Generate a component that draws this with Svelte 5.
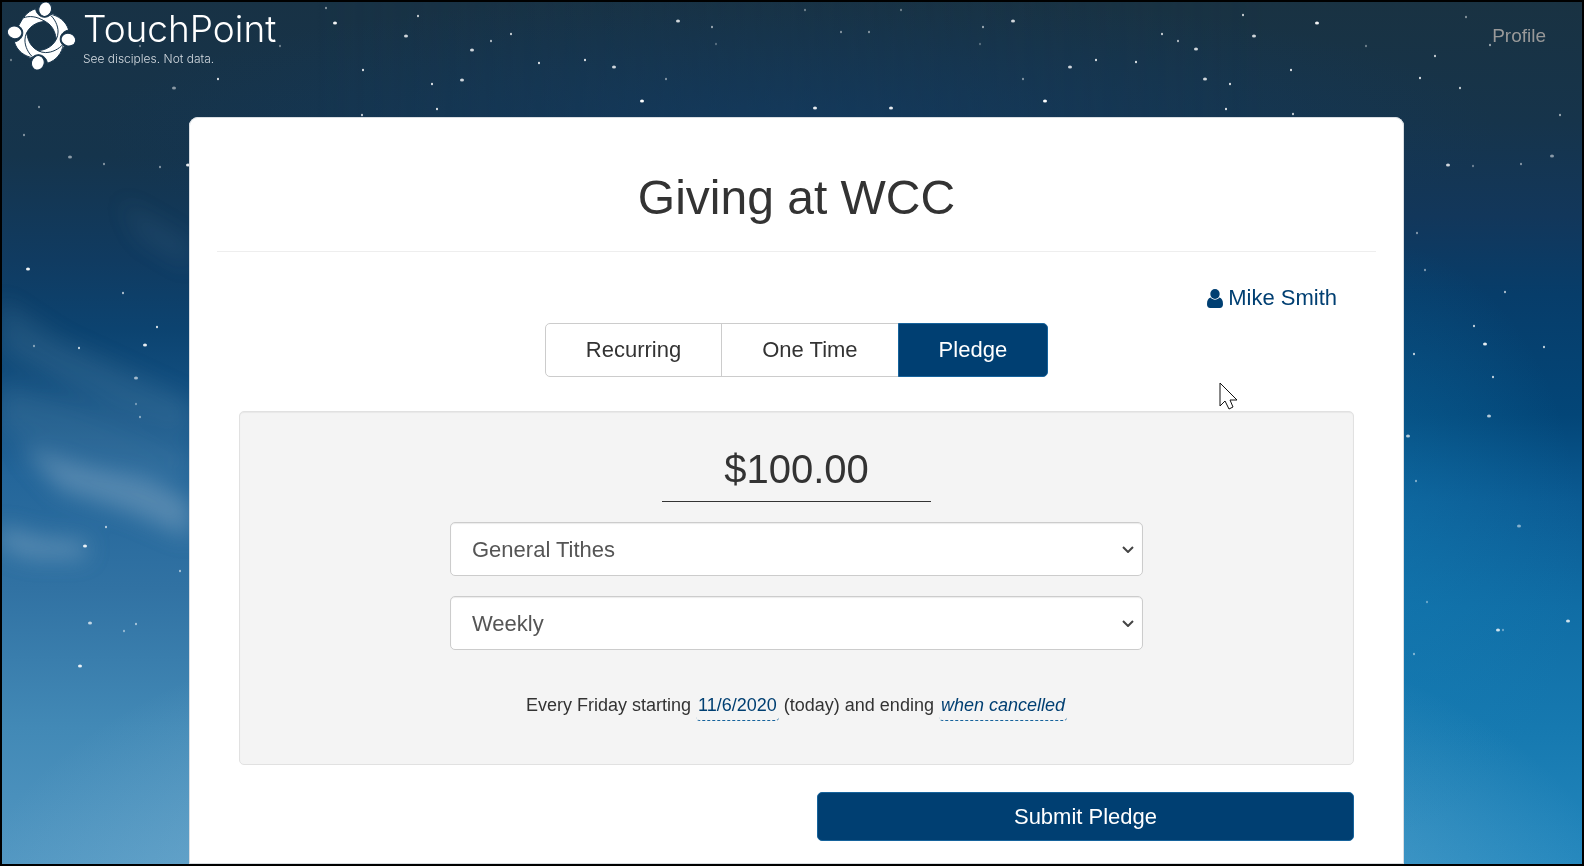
<script lang="ts">
  const tabs = ['Recurring', 'One Time', 'Pledge'];
  const funds = ['General Tithes', 'Missions', 'Building Fund'];
  const frequencies = ['Weekly', 'Monthly', 'Quarterly', 'Annually'];

  let activeTab = $state('Pledge');
  let amount = $state('$100.00');
  let fund = $state('General Tithes');
  let frequency = $state('Weekly');

  // x, y, radius, opacity
  const stars = [
    [326, 8, 1, 0.5], [335, 23, 2, 0.95], [418, 16, 1, 0.8], [406, 36, 2, 0.8], [511, 34, 1, 0.8],
    [491, 41, 1, 0.7], [472, 50, 2, 0.8], [539, 63, 1, 0.9], [585, 60, 1, 0.9], [614, 67, 2, 0.8],
    [363, 70, 1, 0.9], [432, 84, 1, 0.9], [462, 80, 2, 0.8], [437, 109, 1, 0.9], [362, 115, 1, 0.8],
    [642, 101, 2, 1], [678, 21, 2, 0.8], [712, 27, 1, 0.6], [716, 44, 1, 0.3], [666, 79, 1, 0.5],
    [815, 108, 2, 0.9], [891, 108, 2, 0.9], [805, 10, 1, 0.4], [901, 10, 1, 0.4], [841, 32, 1, 0.5],
    [869, 32, 1, 0.5], [983, 27, 1, 0.6], [1013, 21, 2, 0.8], [980, 44, 1, 0.3], [1045, 101, 2, 1],
    [1023, 79, 1, 0.5], [1070, 67, 2, 0.8], [1096, 60, 1, 0.9], [1136, 62, 1, 0.9], [1162, 34, 1, 0.8],
    [1178, 41, 1, 0.7], [1196, 49, 2, 0.8], [1243, 15, 1, 0.8], [1254, 36, 2, 0.8], [1317, 23, 2, 0.95],
    [1205, 79, 2, 0.8], [1230, 84, 1, 0.9], [1291, 70, 1, 0.9], [1226, 109, 1, 0.9], [1293, 114, 1, 0.8],
    [1366, 46, 1, 0.4], [1435, 56, 1, 0.8], [1420, 78, 1, 0.9], [1460, 88, 1, 0.8], [1560, 115, 1, 0.6],
    [1448, 165, 2, 0.8], [1473, 166, 1, 0.4], [1521, 164, 1, 0.5], [1552, 156, 2, 0.5], [1417, 233, 1, 0.5],
    [1425, 270, 1, 0.5], [1505, 292, 1, 0.7], [1474, 326, 1, 0.8], [1485, 344, 2, 0.9], [1544, 347, 1, 0.8],
    [1414, 354, 1, 0.8], [1493, 377, 1, 0.8], [1489, 416, 2, 0.7], [1408, 436, 2, 0.7], [1490, 45, 1, 0.6],
    [1466, 17, 1, 0.5], [1416, 481, 1, 0.5], [1519, 526, 2, 0.5], [1427, 602, 1, 0.4], [1498, 630, 2, 0.8],
    [1503, 630, 1, 0.4], [1568, 621, 2, 0.8], [1414, 654, 1, 0.5], [174, 88, 2, 0.5], [39, 107, 1, 0.5],
    [24, 135, 1, 0.5], [70, 157, 2, 0.5], [104, 164, 1, 0.5], [160, 167, 1, 0.5], [188, 165, 2, 0.9],
    [28, 269, 2, 0.95], [123, 293, 1, 0.7], [157, 327, 1, 0.9], [145, 345, 2, 0.9], [79, 348, 1, 0.8],
    [34, 346, 1, 0.5], [136, 378, 2, 0.6], [136, 404, 1, 0.4], [140, 417, 1, 0.5], [106, 527, 1, 0.7],
    [85, 546, 2, 0.9], [180, 571, 1, 0.6], [90, 623, 2, 0.7], [136, 624, 1, 0.6], [124, 631, 1, 0.5],
    [80, 666, 2, 0.9], [218, 79, 1, 0.9], [280, 46, 1, 0.4], [140, 46, 1, 0.4], [11, 60, 1, 0.4]
  ];
</script>

<div class="page">
  <svg class="sky" viewBox="2 2 1580 862" preserveAspectRatio="none" aria-hidden="true">
    <defs>
      <linearGradient id="skyLeft" x1="0" y1="0" x2="0" y2="1">
        <stop offset="0" stop-color="#183245" />
        <stop offset="0.18" stop-color="#15344c" />
        <stop offset="0.3" stop-color="#103b61" />
        <stop offset="0.38" stop-color="#0c4370" />
        <stop offset="0.45" stop-color="#124f80" />
        <stop offset="0.55" stop-color="#24669a" />
        <stop offset="0.68" stop-color="#3172a3" />
        <stop offset="0.84" stop-color="#4289b6" />
        <stop offset="1" stop-color="#5297c2" />
      </linearGradient>
      <linearGradient id="skyRight" x1="0" y1="0" x2="0" y2="1">
        <stop offset="0" stop-color="#193242" />
        <stop offset="0.14" stop-color="#16344b" />
        <stop offset="0.25" stop-color="#12375b" />
        <stop offset="0.34" stop-color="#073d6a" />
        <stop offset="0.48" stop-color="#034678" />
        <stop offset="0.58" stop-color="#0b5b93" />
        <stop offset="0.7" stop-color="#106da5" />
        <stop offset="0.84" stop-color="#1679b0" />
        <stop offset="1" stop-color="#2487bd" />
      </linearGradient>
      <linearGradient id="fade" x1="0" y1="0" x2="1" y2="0">
        <stop offset="0.2" stop-color="#000" />
        <stop offset="0.8" stop-color="#fff" />
      </linearGradient>
      <mask id="rightMask"><rect width="1584" height="866" fill="url(#fade)" /></mask>
      <radialGradient id="glow">
        <stop offset="0" stop-color="#9fcbe2" stop-opacity="0.75" />
        <stop offset="1" stop-color="#9fcbe2" stop-opacity="0" />
      </radialGradient>
      <radialGradient id="topGlow">
        <stop offset="0" stop-color="#123d68" stop-opacity="0.6" />
        <stop offset="1" stop-color="#123d68" stop-opacity="0" />
      </radialGradient>
      <radialGradient id="sideGlow">
        <stop offset="0" stop-color="#1581b9" stop-opacity="0.4" />
        <stop offset="1" stop-color="#1581b9" stop-opacity="0" />
      </radialGradient>
      <filter id="soft" x="-30%" y="-50%" width="160%" height="200%"><feGaussianBlur stdDeviation="11" /></filter>
    </defs>
    <rect width="1584" height="866" fill="url(#skyLeft)" />
    <rect width="1584" height="866" fill="url(#skyRight)" mask="url(#rightMask)" />
    <ellipse cx="796" cy="130" rx="700" ry="140" fill="url(#topGlow)" />
    <ellipse cx="796" cy="900" rx="820" ry="330" fill="url(#glow)" />
    <ellipse cx="1370" cy="540" rx="210" ry="300" fill="url(#sideGlow)" />
    <g filter="url(#soft)" fill="#8fb0c8">
      <path d="M0 300 L60 340 L190 400 L190 440 L110 410 L0 350 Z" opacity="0.14" />
      <path d="M0 380 L70 400 L190 450 L190 480 L60 450 L0 430 Z" opacity="0.14" />
      <path d="M20 445 L90 465 L150 478 L190 500 L190 538 L130 512 L60 490 Z" opacity="0.45" />
      <path d="M0 526 L40 538 L88 542 L84 558 L30 558 L0 547 Z" opacity="0.45" />
      <path d="M120 200 L190 240 L190 270 L140 240 Z" opacity="0.08" />
    </g>
    {#each stars as [x, y, r, o]}
      <ellipse cx={x} cy={y} rx={r} ry={r === 2 ? 1.6 : 1.2} fill="#fff" opacity={o} />
    {/each}
  </svg>

  <header>
    <a class="brand" href="/">
      <svg class="mark" viewBox="0 0 208 204" aria-hidden="true">
        {#each [0, 90, 180, 270] as angle}
          <g transform="translate(104 102) rotate({angle})">
            <path
              class="body"
              d="M-66 -24 C-62 -52 -44 -74 -18 -82 C-13 -54 18 -48 31 -69 L54 -56 C62 -38 60 -14 44 10 C42 -24 18 -49 -12 -50 C-32 -50 -52 -40 -66 -24 Z"
            />
            <ellipse class="head" cx="11" cy="-81" rx="19" ry="22" transform="rotate(15 11 -81)" />
          </g>
        {/each}
      </svg>
      <span class="words">
        <span class="name">TouchPoint</span>
        <span class="tagline">See disciples. Not data.</span>
      </span>
    </a>
    <a class="profile" href="/profile">Profile</a>
  </header>

  <main>
    <h1>Giving at WCC</h1>

    <form onsubmit={(e) => e.preventDefault()}>
      <div class="person">
        <a href="/person">
          <svg viewBox="0 0 16 19" aria-hidden="true">
            <ellipse cx="8" cy="5" rx="4.7" ry="5" />
            <path d="M3.6 8.6 C1.2 9.2 0 11.5 0 15.2 C0 17.6 1.2 19 3.2 19 H12.8 C14.8 19 16 17.6 16 15.2 C16 11.5 14.8 9.2 12.4 8.6 C11.2 10 9.8 10.7 8 10.7 C6.2 10.7 4.8 10 3.6 8.6 Z" />
          </svg>
          Mike Smith
        </a>
      </div>

      <div class="tabs">
        {#each tabs as tab}
          <button type="button" class:active={activeTab === tab} onclick={() => (activeTab = tab)}>{tab}</button>
        {/each}
      </div>

      <div class="well">
        <input class="amount" type="text" aria-label="Amount" bind:value={amount} />

        <div class="field">
          <select aria-label="Fund" bind:value={fund}>
            {#each funds as item}
              <option value={item}>{item}</option>
            {/each}
          </select>
          <svg viewBox="0 0 12 8" aria-hidden="true"><path d="M1 2 L6 7 L11 2" /></svg>
        </div>

        <div class="field">
          <select aria-label="Frequency" bind:value={frequency}>
            {#each frequencies as item}
              <option value={item}>{item}</option>
            {/each}
          </select>
          <svg viewBox="0 0 12 8" aria-hidden="true"><path d="M1 2 L6 7 L11 2" /></svg>
        </div>

        <p class="schedule">
          Every Friday starting <a href="#start">11/6/2020</a> (today) and ending
          <a href="#end" class="ending">when cancelled</a>
        </p>
      </div>

      <button class="submit" type="submit">Submit Pledge</button>
    </form>
  </main>

  <svg class="cursor" viewBox="0 0 19 28" aria-hidden="true">
    <path d="M1 1 V24 L6 19 L10 27 L14 25 L11 18 H18 Z" />
  </svg>
</div>

<style>
  :global(body) {
    font-family: Arial, 'Liberation Sans', sans-serif;
    color: #333;
  }

  .page {
    position: relative;
    box-sizing: border-box;
    display: flex;
    flex-direction: column;
    min-height: 100vh;
    border: 2px solid #000;
  }

  .sky {
    position: absolute;
    inset: 0;
    z-index: -1;
    width: 100%;
    height: 100%;
  }

  a {
    color: #003f72;
    text-decoration: none;
  }

  header {
    display: flex;
    justify-content: space-between;
    align-items: flex-start;
    height: 115px;
    padding: 0 36px 0 5px;
    box-sizing: border-box;
  }

  .brand {
    display: flex;
    gap: 7px;
    color: #fff;
    font-family: Inter, 'Open Sans', sans-serif;
    font-weight: 300;
  }

  .mark {
    width: 69px;
    height: 68px;
  }

  .mark .body,
  .mark .head {
    fill: #fff;
    stroke: #17344c;
    stroke-width: 3;
  }

  .words {
    display: flex;
    flex-direction: column;
    padding-top: 5px;
  }

  .name {
    font-size: 37px;
    line-height: 44px;
  }

  .tagline {
    font-size: 12px;
    line-height: 16px;
    color: #d3dae0;
  }

  .profile {
    padding-top: 22px;
    font-size: 19px;
    line-height: 24px;
    color: #999;
  }

  main {
    flex: 1;
    box-sizing: border-box;
    margin: 0 178px 0 187px;
    padding: 53px 28px 0;
    background: #fff;
    border-radius: 9px 9px 0 0;
    box-shadow: inset 0 0 0 1px #d8dde2;
  }

  h1 {
    margin: 0;
    padding-bottom: 25px;
    border-bottom: 1px solid #eee;
    font-size: 48px;
    font-weight: 400;
    line-height: 56px;
    text-align: center;
  }

  form {
    display: flex;
    flex-direction: column;
    padding: 30px 22px 22px;
  }

  .person {
    display: flex;
    justify-content: flex-end;
    padding-right: 17px;
    margin-bottom: 9px;
    font-size: 22px;
    line-height: 32px;
  }

  .person a {
    display: flex;
    align-items: center;
    gap: 5px;
  }

  .person svg {
    width: 16px;
    height: 19px;
    fill: #003f72;
  }

  .tabs {
    display: flex;
    justify-content: center;
    margin-bottom: 34px;
  }

  .tabs button {
    height: 54px;
    padding: 0 40px;
    border: 1px solid #ccc;
    background: #fff;
    color: #333;
    font: inherit;
    font-size: 22px;
  }

  .tabs button + button {
    margin-left: -1px;
  }

  .tabs button:first-child {
    border-radius: 5px 0 0 5px;
  }

  .tabs button:last-child {
    border-radius: 0 5px 5px 0;
  }

  .tabs .active {
    border-color: #16639c;
    background: #003f72;
    color: #fff;
  }

  .well {
    display: flex;
    flex-direction: column;
    align-items: center;
    gap: 20px;
    padding: 34px 20px 46px;
    margin-bottom: 27px;
    border: 1px solid #e1e1e1;
    border-radius: 5px;
    background: #f4f4f4;
    box-shadow: inset 0 1px 1px rgba(0, 0, 0, 0.05);
  }

  .amount {
    box-sizing: border-box;
    width: 269px;
    height: 56px;
    padding: 0 0 8px;
    border: 0;
    border-bottom: 1px solid #333;
    background: transparent;
    color: #333;
    font: inherit;
    font-size: 40px;
    text-align: center;
  }

  .field {
    display: grid;
    align-items: center;
    width: 100%;
    max-width: 693px;
  }

  .field select,
  .field svg {
    grid-area: 1 / 1;
  }

  .field select {
    height: 54px;
    padding: 0 21px;
    border: 1px solid #ccc;
    border-radius: 5px;
    background: #fff;
    box-shadow: inset 0 1px 1px rgba(0, 0, 0, 0.08);
    color: #555;
    font: inherit;
    font-size: 22px;
    appearance: none;
  }

  .field svg {
    justify-self: end;
    width: 12px;
    height: 8px;
    margin-right: 9px;
    fill: none;
    stroke: #444;
    stroke-width: 2;
    pointer-events: none;
  }

  .schedule {
    margin: 22px 0 0;
    font-size: 18px;
    line-height: 26px;
    text-align: center;
  }

  .schedule a {
    padding: 0 2px 5px;
    border-bottom: 1px dashed #16639c;
    border-radius: 4px;
  }

  .schedule .ending {
    font-style: italic;
  }

  .submit {
    align-self: flex-end;
    width: 537px;
    max-width: 100%;
    height: 49px;
    border: 1px solid #16639c;
    border-radius: 5px;
    background: #003f72;
    color: #fff;
    font: inherit;
    font-size: 22px;
  }

  .cursor {
    position: absolute;
    top: 380px;
    left: 1217px;
    width: 19px;
    height: 28px;
    fill: #fff;
    stroke: #111;
    stroke-width: 1;
  }

  @media (max-width: 1100px) {
    main {
      margin: 0 20px;
    }

    .cursor {
      display: none;
    }
  }
</style>
